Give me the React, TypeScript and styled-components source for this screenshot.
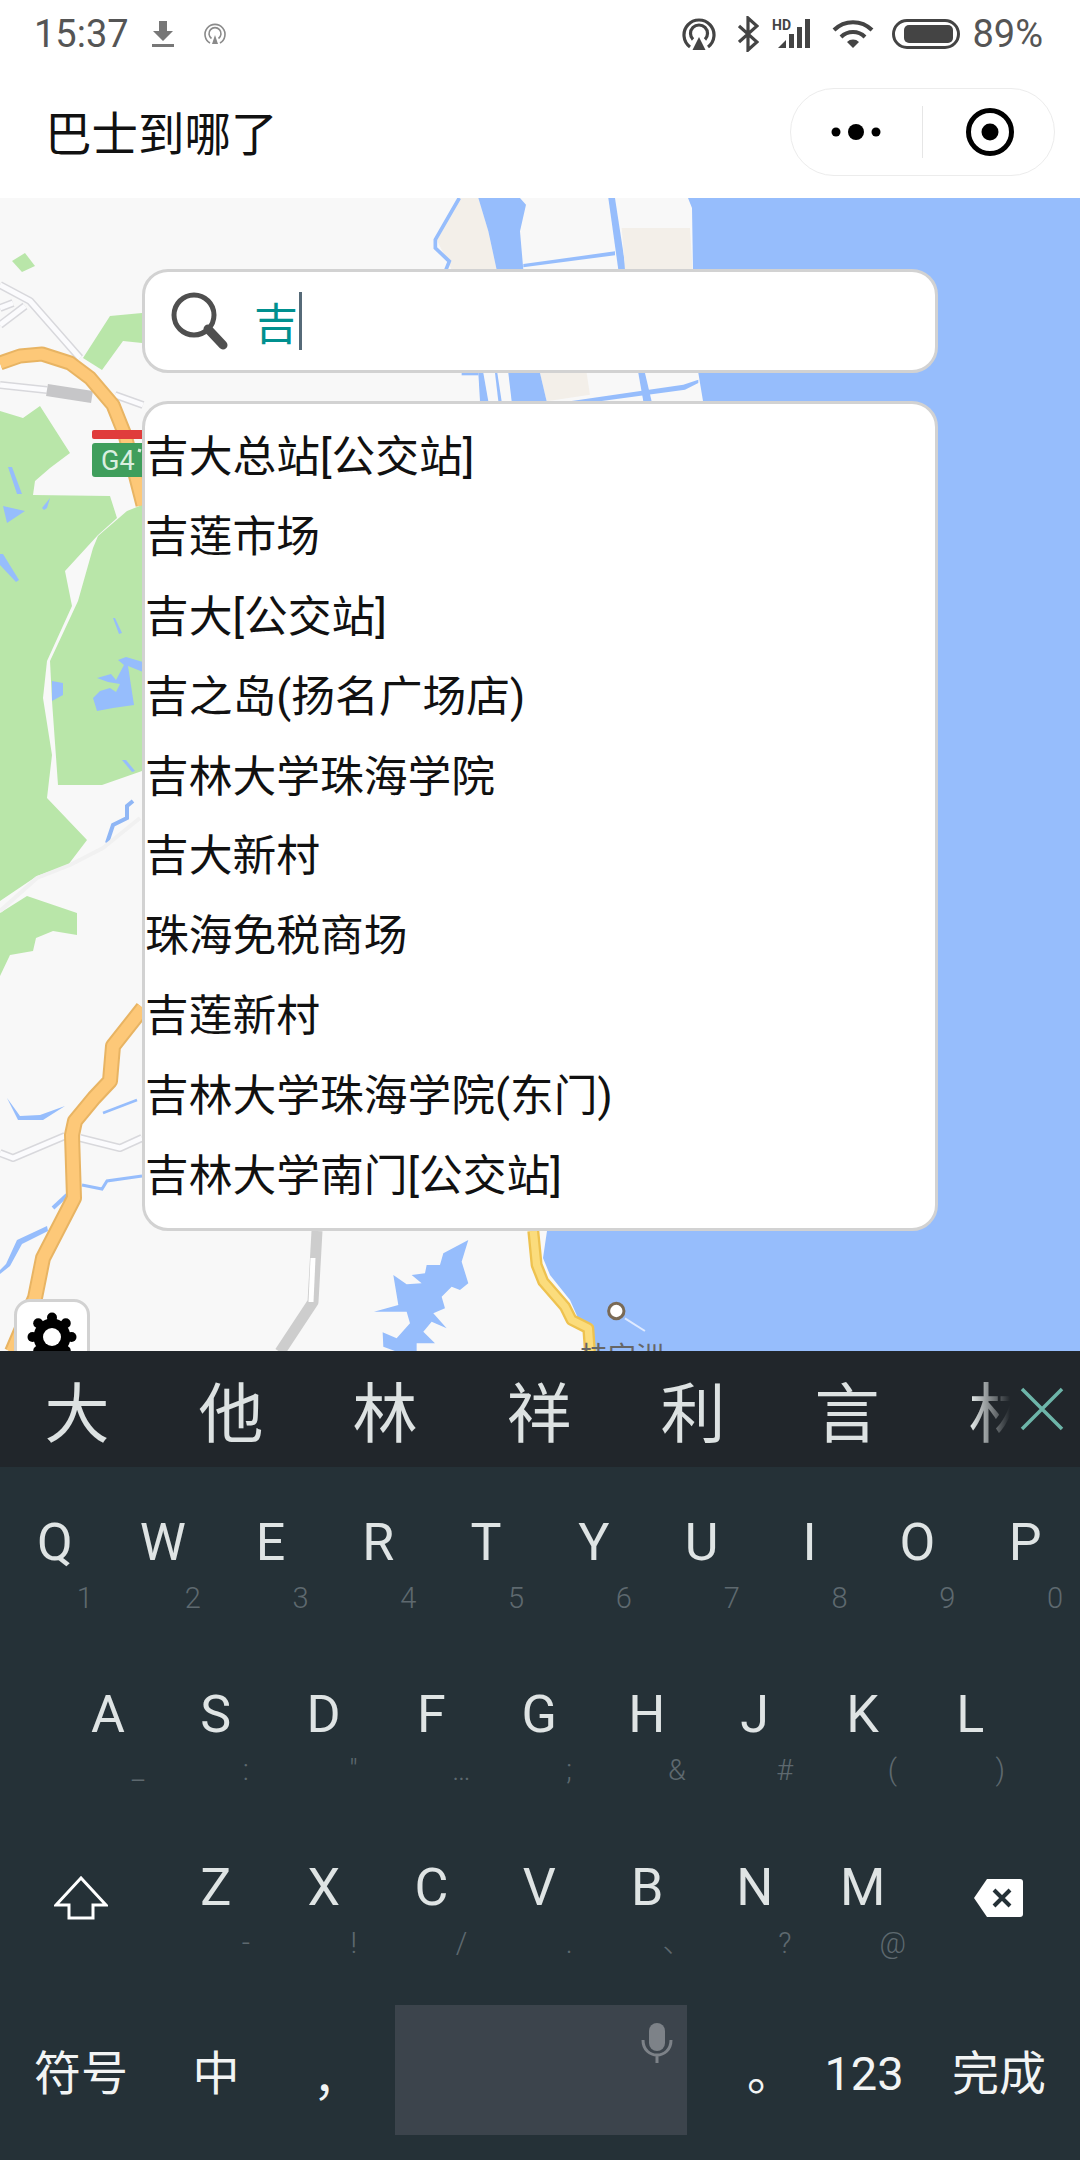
import styled, { createGlobalStyle } from "styled-components";

const GlobalStyle = createGlobalStyle`
  html, body { margin: 0; padding: 0; background: #fff; }
  body { font-family: Roboto, "Noto Sans CJK SC", sans-serif; }
  * { box-sizing: border-box; }
`;

const Page = styled.div`
  width: 1080px;
  height: 2160px;
  display: flex;
  flex-direction: column;
  overflow: hidden;
`;

const StatusBar = styled.div`
  height: 66px;
  display: flex;
  align-items: center;
  justify-content: space-between;
  padding: 2px 37px 0 34px;
  color: #555;
  font-size: 38px;
`;

const StatusGroup = styled.div`
  display: flex;
  align-items: center;
`;

const StatusIcon = styled.svg<{ $ml: number }>`
  display: block;
  margin-left: ${(p) => p.$ml}px;
  flex: none;
`;

const StatusText = styled.span<{ $ml?: number }>`
  margin-left: ${(p) => p.$ml ?? 0}px;
  line-height: 62px;
`;

const NavBar = styled.div`
  height: 132px;
  display: flex;
  align-items: center;
  justify-content: space-between;
  padding: 0 25px 0 45px;
`;

const NavTitle = styled.div`
  font-family: "Noto Sans CJK SC", sans-serif;
  font-size: 46.5px;
  line-height: 60px;
  margin-top: -2px;
  color: #111;
`;

const Capsule = styled.div`
  width: 265px;
  height: 88px;
  border: 1.5px solid #ececec;
  border-radius: 44px;
  display: flex;
  align-items: center;
`;

const CapsuleCell = styled.div`
  flex: 1;
  display: flex;
  align-items: center;
  justify-content: center;
`;

const CapsuleLine = styled.div`
  width: 1px;
  height: 52px;
  background: #e6e6e6;
`;

const MapArea = styled.div`
  position: relative;
  height: 1153px;
  overflow: hidden;
  padding: 71px 142px 0;
  background: #f8f8f8;
`;

const MapDrawing = styled.svg`
  position: absolute;
  left: 0;
  top: 0;
  width: 1080px;
  height: 1153px;
`;

const SearchBox = styled.div`
  position: relative;
  height: 104px;
  background: #fff;
  border: 3px solid #d2d2d2;
  border-radius: 26px;
  display: flex;
  align-items: center;
  padding: 0 0 0 25px;
`;

const SearchValue = styled.div`
  margin-left: 26px;
  font-family: "Noto Sans CJK SC", sans-serif;
  font-size: 44px;
  line-height: 60px;
  color: #00908f;
  display: flex;
  align-items: center;
`;

const Caret = styled.span`
  display: block;
  width: 3px;
  height: 58px;
  background: #566a78;
  margin-left: 1px;
`;

const SuggestList = styled.div`
  position: relative;
  margin-top: 28px;
  height: 830px;
  background: #fff;
  border: 3px solid #d2d2d2;
  border-radius: 26px;
  padding: 14px 0 0;
`;

const SuggestRow = styled.div`
  height: 79.9px;
  line-height: 79.9px;
  font-family: Roboto, "Noto Sans CJK SC", sans-serif;
  font-size: 43.75px;
  color: #111;
  white-space: nowrap;
`;

const GearButton = styled.div`
  position: absolute;
  left: 14px;
  top: 1101px;
  width: 76px;
  height: 76px;
  background: #fff;
  border: 3px solid #d2d2d2;
  border-radius: 16px;
  display: flex;
  align-items: center;
  justify-content: center;
`;

const CandidateBar = styled.div`
  position: relative;
  height: 116px;
  background: #21262b;
  display: flex;
  align-items: center;
  overflow: hidden;
`;

const Candidate = styled.div`
  flex: none;
  width: 154px;
  text-align: center;
  font-family: "Noto Sans CJK SC", sans-serif;
  font-size: 65px;
  line-height: 116px;
  color: #dde2e2;
  &:last-of-type {
    margin-left: -15px;
  }
`;

const CandidateClose = styled.div`
  position: absolute;
  right: 0;
  top: 0;
  bottom: 0;
  width: 108px;
  display: flex;
  align-items: center;
  justify-content: flex-end;
  padding-right: 16px;
  background: linear-gradient(90deg, rgba(33, 38, 43, 0) 0, #21262b 38px);
`;

const Keyboard = styled.div`
  flex: 1;
  background: #253137;
  padding-top: 46px;
`;

const LetterRow = styled.div<{ $inset: number; $h: number }>`
  height: ${(p) => p.$h}px;
  padding-left: ${(p) => p.$inset}px;
  display: flex;
`;

const Key = styled.div`
  flex: none;
  width: 107.8px;
  display: flex;
  flex-direction: column;
  align-items: center;
`;

const SideKey = styled.div`
  flex: none;
  width: 162px;
  height: 80px;
  display: flex;
  align-items: center;
  justify-content: center;
`;

const Letter = styled.div`
  font-size: 52px;
  line-height: 60px;
  color: #dfe4e4;
`;

const Hint = styled.div`
  width: 60px;
  margin-left: 60px;
  margin-top: 7px;
  text-align: center;
  font-size: 29px;
  font-weight: 300;
  line-height: 36px;
  color: #5e696f;
`;

const BottomRow = styled.div`
  display: grid;
  grid-template-columns: 162px 108px 125px 292px 123px 108px 162px;
  height: 130px;
  align-items: center;
`;

const BottomKey = styled.div<{ $dx?: number; $dy?: number }>`
  text-align: center;
  font-family: "Noto Sans CJK SC", sans-serif;
  font-size: 47px;
  line-height: 130px;
  height: 130px;
  color: #f2f4f4;
  padding-left: ${(p) => p.$dx ?? 0}px;
  padding-top: ${(p) => p.$dy ?? 0}px;
`;

const DigitsKey = styled(BottomKey)`
  font-family: Roboto, sans-serif;
  font-size: 47px;
`;

const SpaceKey = styled.div`
  position: relative;
  height: 130px;
  background: #3c444c;
`;

const MicIcon = styled.svg`
  position: absolute;
  right: 14px;
  top: 18px;
`;

const suggestions = [
  "吉大总站[公交站]",
  "吉莲市场",
  "吉大[公交站]",
  "吉之岛(扬名广场店)",
  "吉林大学珠海学院",
  "吉大新村",
  "珠海免税商场",
  "吉莲新村",
  "吉林大学珠海学院(东门)",
  "吉林大学南门[公交站]",
];

const candidates = ["大", "他", "林", "祥", "利", "言", "林"];

const row1 = [["Q", "1"], ["W", "2"], ["E", "3"], ["R", "4"], ["T", "5"], ["Y", "6"], ["U", "7"], ["I", "8"], ["O", "9"], ["P", "0"]];
const row2 = [["A", "_"], ["S", ":"], ["D", '"'], ["F", "…"], ["G", ";"], ["H", "&"], ["J", "#"], ["K", "("], ["L", ")"]];
const row3 = [["Z", "-"], ["X", "!"], ["C", "/"], ["V", "."], ["B", "、"], ["N", "?"], ["M", "@"]];

const renderKeys = (keys: string[][]) =>
  keys.map(([letter, hint]) => (
    <Key key={letter}>
      <Letter>{letter}</Letter>
      <Hint>{hint}</Hint>
    </Key>
  ));

// the map tile, in page coordinates
function MapBackground() {
  return (
    <MapDrawing viewBox="0 198 1080 1153">
      <polygon fill="#96bdfc" points="688,198 1080,198 1080,1352 595,1352 593,1325 578,1318 570,1300 550,1275 543,1258 547,1231 600,800 703,401 698,371 693,270 692,208" />
      {/* harbour at the top, drawn from a 3x crop */}
      <g transform="translate(420 198) scale(.3333)">
        <polygon fill="#f3efe9" points="120,0 175,0 205,100 230,215 95,215 50,125" />
        <polyline fill="none" stroke="#96bdfc" strokeWidth="11" points="118,0 46,125 46,150 88,190 78,215" />
        <polygon fill="#96bdfc" points="175,0 300,0 318,20 300,100 310,215 230,215 205,100" />
        <polygon fill="#96bdfc" points="565,0 585,0 618,215 595,215" />
        <polygon fill="#96bdfc" points="310,198 585,160 585,172 310,208" />
        <polygon fill="#f3efe9" points="605,90 810,90 818,215 615,215" />
        <polygon fill="#f3efe9" points="360,525 500,525 510,590 380,610" />
        <polygon fill="#96bdfc" points="265,525 360,525 380,610 275,610" />
        <polygon fill="#96bdfc" points="175,525 190,525 205,610 180,610" />
        <polygon fill="#96bdfc" points="125,525 175,525 175,532 125,532" />
        <polygon fill="#96bdfc" points="225,525 232,525 245,610 235,610" />
        <polygon fill="#96bdfc" points="655,525 675,525 695,610 670,610" />
        <polygon fill="#96bdfc" points="450,610 790,560 835,545 835,555 795,575 540,610" />
      </g>

      <g fill="#b9e6a9">
        <polygon points="12,261 25,253 35,266 22,272" />
        <polygon points="83,358 110,316 142,313 142,343 123,341 102,370" />
        <polygon points="0,411 23,418 40,406 70,453 50,468 35,481 33,495 110,496 117,518 98,535 65,571 72,606 47,661 43,698 52,755 47,798 87,840 68,865 37,876 0,901" />
        <polygon points="142,505 127,511 98,536 93,548 78,601 50,661 52,701 58,785 102,785 142,771" />
        <polygon points="0,913 27,896 77,913 77,935 53,931 36,938 33,951 10,955 0,976" />
      </g>

      <g fill="#96bdfc">
        <polygon points="8,467 12,467 22,494 17,494" />
        <polygon points="3,506 25,511 7,523" />
        <polygon points="42,508 50,498 47,508 44,510" />
        <polygon points="52,681 63,683 63,695 52,701" />
        <polygon points="113,618 115,618 122,633 119,634" />
        <polygon points="122,760 126,760 135,771 132,772" />
        <polygon points="97,678 111,674 116,680 124,665 118,660 126,657 143,662 143,672 128,666 134,705 113,708 97,711 93,698 100,691 110,688 116,692 120,684 108,682" />
        <polygon points="0,554 3,554 19,580 16,582 0,565" />
        <polygon points="7,1098 20,1116 40,1115 65,1106 43,1120 18,1120" />
        <polygon points="47,1226 48,1231 22,1244 10,1266 0,1274 0,1270 6,1264 17,1240" />
      </g>
      <g fill="none" stroke="#96bdfc">
        <polyline strokeWidth="4" stroke="#8fb6f5" points="107,843 113,825 127,818 127,806 133,801" />
        <polyline strokeWidth="2.5" points="103,1113 137,1100" />
        <polyline strokeWidth="3" points="82,1185 102,1189 107,1181 142,1176" />
        <polyline strokeWidth="4" points="53,1208 67,1195" />
      </g>

      {/* minor roads */}
      <g fill="none" strokeLinejoin="round">
        <g stroke="#d8d8dc" strokeWidth="8">
          <polyline points="0,285 30,301 80,358" />
          <polyline points="0,325 25,306" />
          <polyline points="0,308 13,303" />
          <polyline points="0,385 47,390" />
          <polyline points="115,395 143,405" />
          <polyline points="0,1153 13,1158 65,1136" />
          <polyline points="80,1138 120,1148 142,1138" />
        </g>
        <g stroke="#fbfbfd" strokeWidth="5">
          <polyline points="0,285 30,301 80,358" />
          <polyline points="0,325 25,306" />
          <polyline points="0,308 13,303" />
          <polyline points="0,385 47,390" />
          <polyline points="115,395 143,405" />
          <polyline points="0,1153 13,1158 65,1136" />
          <polyline points="80,1138 120,1148 142,1138" />
        </g>
        <polyline stroke="#c6c6c8" strokeWidth="12" points="47,390 92,397" />
        <polyline stroke="#f1f1f1" strokeWidth="4" points="0,911 37,878 70,865 103,848 140,818" />
        <polyline stroke="#cdcdcd" strokeWidth="11" points="317,1231 313,1302 280,1352" />
        <polyline stroke="#ffffff" strokeWidth="5" points="313,1258 311,1302" />
      </g>

      {/* highway */}
      <g fill="none" strokeLinejoin="round">
        <polyline stroke="#e8b463" strokeWidth="15" points="0,363 20,356 42,354 70,363 90,378 113,405 125,435 143,505" />
        <polyline stroke="#fdc878" strokeWidth="11" points="0,363 20,356 42,354 70,363 90,378 113,405 125,435 143,505" />
        <polyline stroke="#e8b463" strokeWidth="16" points="143,1008 113,1046 110,1081 94,1098 75,1121 72,1135 74,1198 43,1258 35,1298 12,1352" />
        <polyline stroke="#fdc878" strokeWidth="12" points="143,1008 113,1046 110,1081 94,1098 75,1121 72,1135 74,1198 43,1258 35,1298 12,1352" />
      </g>

      <rect x="92" y="430" width="56" height="9" rx="2" fill="#e03c3c" />
      <rect x="92" y="443" width="56" height="34" rx="3" fill="#3f9e5c" />
      <text x="101" y="470" fontFamily="Roboto, sans-serif" fontSize="27" fill="#d9efe0">G4</text>
      <path d="M138 450l3 1" stroke="#d9efe0" strokeWidth="3" />

      {/* lake and coast road at the bottom */}
      <g transform="translate(250 1225) scale(.3333)">
        <polygon fill="#96bdfc" points="655,45 635,110 655,175 630,195 605,185 575,215 585,250 550,265 590,310 545,290 520,320 555,355 500,355 500,380 440,380 400,365 398,322 440,340 480,295 470,260 372,260 445,240 430,150 470,178 515,175 485,150 525,145 530,120 570,120 580,85" />
        <polyline fill="none" stroke="#eec24f" strokeWidth="36" strokeLinejoin="round" points="850,18 860,120 880,170 945,245 965,285 1015,310 1020,380" />
        <polyline fill="none" stroke="#fbdc7c" strokeWidth="22" strokeLinejoin="round" points="850,18 860,120 880,170 945,245 965,285 1015,310 1020,380" />
        <line x1="1125" y1="280" x2="1185" y2="318" stroke="#dfeaff" strokeWidth="6" />
        <circle cx="1099" cy="258" r="23" fill="#fff" stroke="#7a6a55" strokeWidth="9" />
      </g>
      <text x="580" y="1367" fontFamily="'Noto Sans CJK SC', sans-serif" fontSize="28" fill="#666">桂定洲</text>
    </MapDrawing>
  );
}

export default function App() {
  return (
    <Page>
      <GlobalStyle />
      <StatusBar>
        <StatusGroup>
          <StatusText>15:37</StatusText>
          <StatusIcon $ml={22} width="24" height="28" viewBox="0 0 24 28">
            <path d="M8 1h8v10h6L12 21 2 11h6z" fill="#777" />
            <rect x="1" y="24" width="22" height="3" fill="#777" />
          </StatusIcon>
          <StatusIcon $ml={28} width="24" height="24" viewBox="0 0 24 24" fill="none" stroke="#8a8a8a" strokeWidth="1.6">
            <path d="M7 21a10 10 0 1 1 10 0" />
            <path d="M8.5 16.5a6 6 0 1 1 7 0" />
            <path d="M12 13l-3 9h6z" fill="#8a8a8a" stroke="none" />
          </StatusIcon>
        </StatusGroup>
        <StatusGroup>
          <StatusIcon width="34" height="34" viewBox="0 0 34 34" $ml={0} fill="none" stroke="#444" strokeWidth="3.2">
            <path d="M8 30a15 15 0 1 1 18 0" />
            <path d="M11 22.5a8.5 8.5 0 1 1 12 0" />
            <path d="M17 20l-6.500 13h13z" fill="#444" stroke="none" />
          </StatusIcon>
          <StatusIcon $ml={22} width="21" height="36" viewBox="0 0 21 36" fill="none" stroke="#444" strokeWidth="3.2">
            <path d="M1 10l18 16-9 8V2l9 8L1 26" />
          </StatusIcon>
          <StatusIcon $ml={13} width="40" height="32" viewBox="0 0 40 32">
            <text x="0" y="12" fontFamily="Roboto, sans-serif" fontWeight="700" fontSize="14" fill="#444">HD</text>
            <path d="M6 30l8-8v8z" fill="#444" />
            <rect x="17" y="16" width="5" height="14" fill="#444" />
            <rect x="25" y="9" width="5" height="21" fill="#444" />
            <rect x="33" y="1" width="5" height="29" fill="#444" />
          </StatusIcon>
          <StatusIcon $ml={20} width="42" height="30" viewBox="0 0 42 30" fill="none" stroke="#444" strokeWidth="4">
            <path d="M2 11a27 27 0 0 1 38 0" />
            <path d="M9 18a17 17 0 0 1 24 0" />
            <path d="M21 29l-6-6a8.500 8.500 0 0 1 12 0z" fill="#444" stroke="none" />
          </StatusIcon>
          <StatusIcon $ml={18} width="68" height="30" viewBox="0 0 68 30">
            <rect x="1.500" y="1.500" width="65" height="27" rx="13.500" fill="none" stroke="#444" strokeWidth="3" />
            <rect x="12" y="6" width="49" height="18" rx="5" fill="#444" />
          </StatusIcon>
          <StatusText $ml={12}>89%</StatusText>
        </StatusGroup>
      </StatusBar>

      <NavBar>
        <NavTitle>巴士到哪了</NavTitle>
        <Capsule>
          <CapsuleCell>
            <svg width="56" height="20" viewBox="0 0 56 20" fill="#000">
              <circle cx="7" cy="10" r="4.500" />
              <circle cx="27" cy="10" r="8" />
              <circle cx="47" cy="10" r="4.500" />
            </svg>
          </CapsuleCell>
          <CapsuleLine />
          <CapsuleCell>
            <svg width="50" height="50" viewBox="0 0 50 50">
              <circle cx="26" cy="25" r="21.500" fill="none" stroke="#000" strokeWidth="5" />
              <circle cx="26" cy="25" r="8.500" fill="#000" />
            </svg>
          </CapsuleCell>
        </Capsule>
      </NavBar>

      <MapArea>
        <MapBackground />
        <SearchBox>
          <svg width="58" height="58" viewBox="0 0 58 58" fill="none">
            <circle cx="24" cy="23" r="20" stroke="#4f4f4f" strokeWidth="5" />
            <path d="M38 37l15 16" stroke="#4f4f4f" strokeWidth="9" strokeLinecap="round" />
          </svg>
          <SearchValue>
            吉
            <Caret />
          </SearchValue>
        </SearchBox>
        <SuggestList>
          {suggestions.map((s) => (
            <SuggestRow key={s}>{s}</SuggestRow>
          ))}
        </SuggestList>
        <GearButton>
          <svg width="50" height="50" viewBox="0 0 50 50">
            <g fill="#000">
              {[0, 45, 90, 135, 180, 225, 270, 315].map((a) => (
                <circle key={a} cx="25" cy="5.500" r="5" transform={`rotate(${a} 25 25)`} />
              ))}
              <circle cx="25" cy="25" r="18.500" />
            </g>
            <circle cx="25" cy="25" r="9" fill="#fff" />
          </svg>
        </GearButton>
      </MapArea>

      <CandidateBar>
        {candidates.map((c, i) => (
          <Candidate key={i}>{c}</Candidate>
        ))}
        <CandidateClose>
          <svg width="44" height="44" viewBox="0 0 44 44" stroke="#6db5a9" strokeWidth="3.500">
            <path d="M2 2l40 40M42 2L2 42" />
          </svg>
        </CandidateClose>
      </CandidateBar>

      <Keyboard>
        <LetterRow $inset={1} $h={172}>{renderKeys(row1)}</LetterRow>
        <LetterRow $inset={54} $h={173}>{renderKeys(row2)}</LetterRow>
        <LetterRow $inset={0} $h={147}>
          <SideKey>
            <svg width="54" height="44" viewBox="0 0 54 44" fill="none" stroke="#fff" strokeWidth="3">
              <path d="M27 2L2 29h13v13h24V29h13z" />
            </svg>
          </SideKey>
          {renderKeys(row3)}
          <SideKey>
            <svg width="50" height="38" viewBox="0 0 50 38">
              <path d="M14 0h33a3 3 0 0 1 3 3v32a3 3 0 0 1-3 3H14L1 19z" fill="#fff" />
              <path d="M21 11l16 16M37 11L21 27" stroke="#253137" strokeWidth="4" />
            </svg>
          </SideKey>
        </LetterRow>
        <BottomRow>
          <BottomKey>符号</BottomKey>
          <BottomKey>中</BottomKey>
          <BottomKey $dx={8} $dy={5}>，</BottomKey>
          <SpaceKey>
            <MicIcon width="32" height="40" viewBox="0 0 32 40" fill="none">
              <rect x="8" y="0" width="16" height="28" rx="8" fill="#7d8288" />
              <path d="M2 17c0 20 28 20 28 0M16 31v9" stroke="#7d8288" strokeWidth="3" />
            </MicIcon>
          </SpaceKey>
          <BottomKey $dx={44}>。</BottomKey>
          <DigitsKey $dy={4}>123</DigitsKey>
          <BottomKey>完成</BottomKey>
        </BottomRow>
      </Keyboard>
    </Page>
  );
}
